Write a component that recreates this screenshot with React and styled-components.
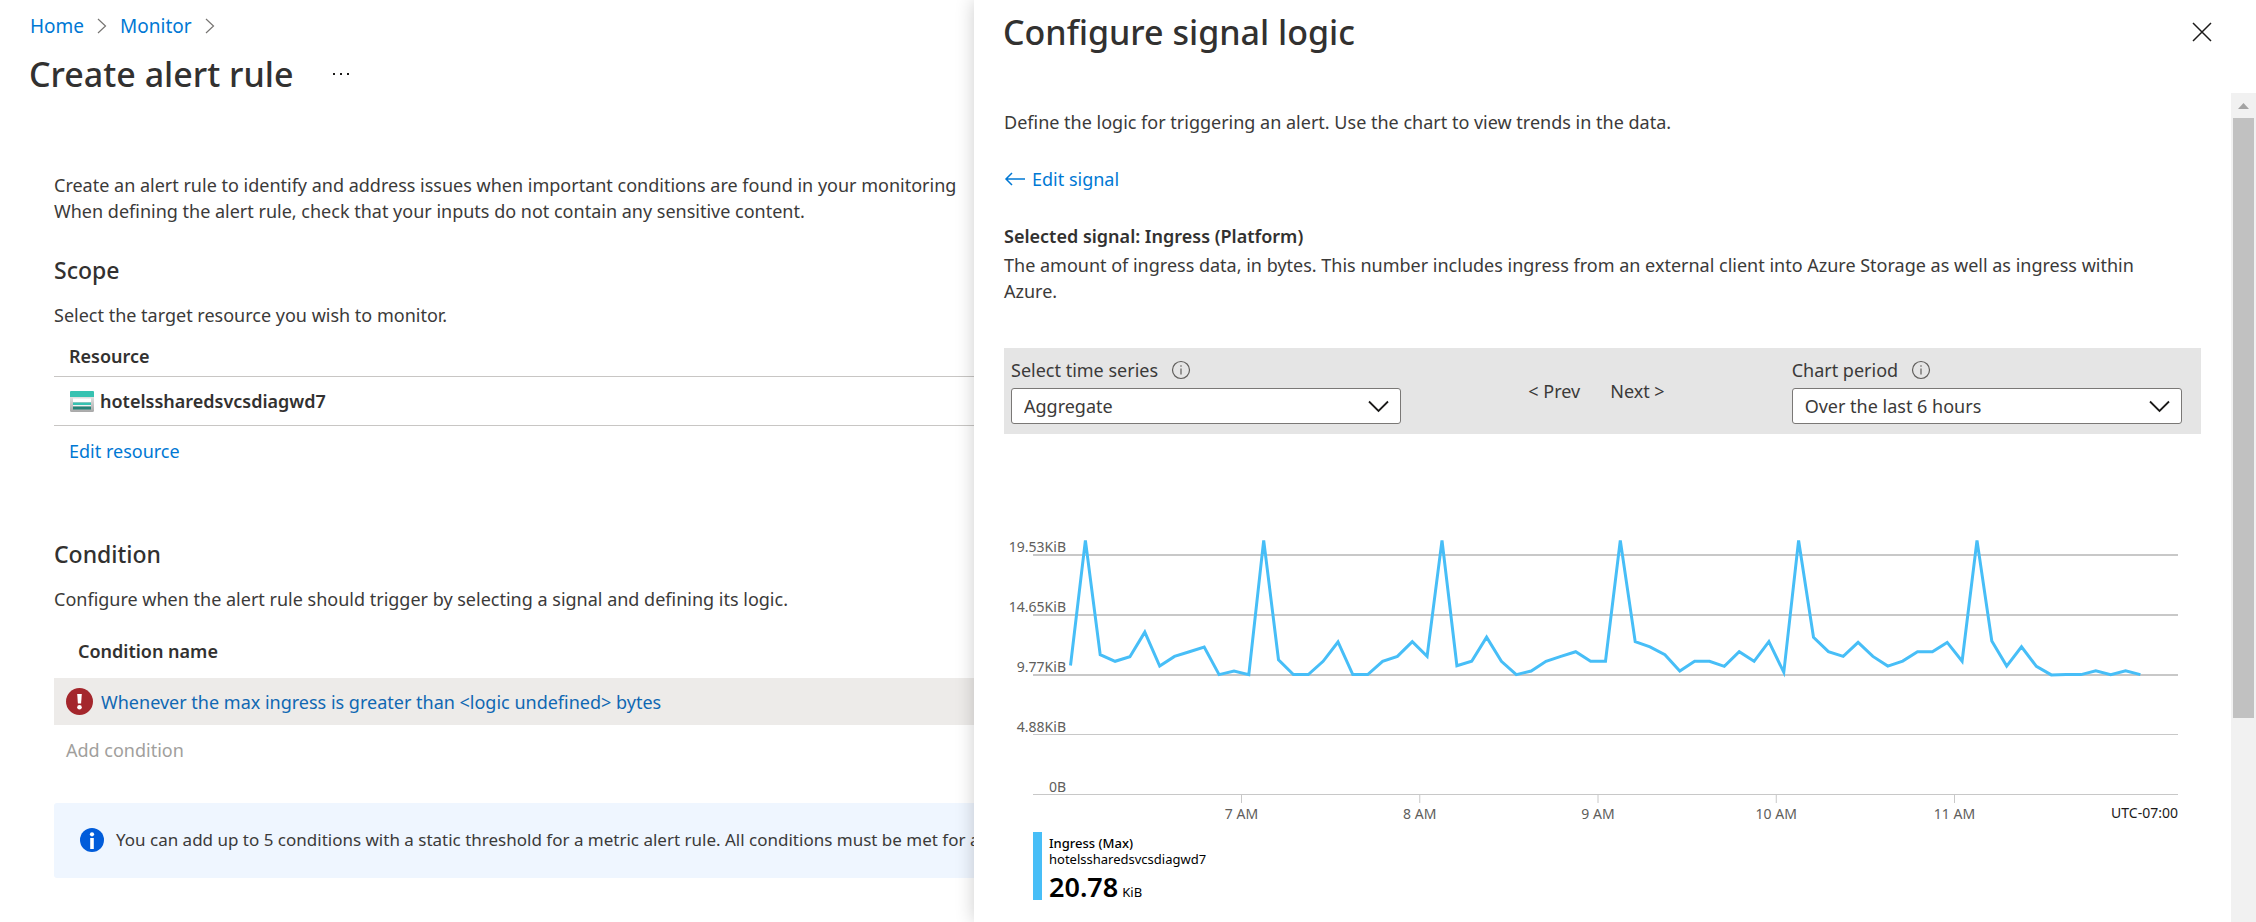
import React from "react";
import styled, { createGlobalStyle } from "styled-components";

const GlobalStyle = createGlobalStyle`
  *, *::before, *::after { box-sizing: border-box; }
  body {
    margin: 0;
    background: #fff;
    color: #3b3a39;
    font-family: "Noto Sans", "Open Sans", sans-serif;
    font-size: 18px;
    line-height: 26px;
  }
  button, select { font: inherit; color: inherit; }
  svg { display: block; flex: none; }
`;

const Page = styled.div`
  display: grid;
  grid-template-columns: minmax(0, 974fr) minmax(0, 1282fr);
  min-height: 100vh;
`;

/* ---------- alert rule page ---------- */

const RulePage = styled.main`
  overflow: hidden;
  padding-top: 14px;
`;

const Breadcrumb = styled.nav`
  display: flex;
  align-items: center;
  gap: 13px;
  height: 24px;
  padding-left: 30px;
  font-size: 19px;
  line-height: 24px;
`;

const Link = styled.a`
  color: #0078d4;
  text-decoration: none;
`;

const TitleBar = styled.header`
  display: flex;
  align-items: center;
  gap: 38px;
  margin-top: 14px;
  padding-left: 29px;
`;

const Title = styled.h1`
  margin: 0;
  color: #323130;
  font-size: 34px;
  font-weight: 500;
  line-height: 44px;
`;

const IconButton = styled.button`
  display: flex;
  padding: 0;
  border: 0;
  background: none;
  color: #1b1a19;
`;

const RuleBody = styled.div`
  padding: 76px 0 32px 54px;
  white-space: nowrap;
`;

const Text = styled.p`
  margin: 0;
`;

const Section = styled.section`
  margin-top: ${(p) => p.$gap}px;
`;

const SectionTitle = styled.h2`
  margin: 0 0 18px;
  color: #323130;
  font-size: 23px;
  font-weight: 500;
  line-height: 28px;
`;

const Table = styled.table`
  width: 100%;
  border-collapse: separate;
  border-spacing: 0;
`;

const ResourceHead = styled.th`
  padding: 15px 15px 7px;
  border-bottom: 1px solid #c8c6c4;
  color: #323130;
  font-weight: 600;
  text-align: left;
`;

const ResourceCell = styled.td`
  padding: 11px 16px;
  border-bottom: 1px solid #c8c6c4;
  color: #323130;
  font-weight: 600;
`;

const ConditionHead = styled.th`
  padding: 26px 24px 14px;
  color: #323130;
  font-weight: 600;
  text-align: left;
`;

const ConditionCell = styled.td`
  padding: 10px 12px;
  background: #edebe9;
`;

const IconLabel = styled.div`
  display: flex;
  align-items: center;
  gap: ${(p) => p.$gap}px;
`;

const ConditionLink = styled(Link)`
  color: #1068b3;
`;

const TableAction = styled.div`
  margin-top: 12px;
  padding-left: ${(p) => p.$indent}px;
`;

const AddButton = styled.button`
  display: block;
  padding: 0;
  border: 0;
  background: none;
  &:disabled { color: #a19f9d; }
`;

const Banner = styled.div`
  display: flex;
  align-items: center;
  gap: 12px;
  margin-top: 40px;
  padding: 24px 0 25px 26px;
  border-radius: 3px 0 0 3px;
  background: #eff6ff;
  font-size: 17px;
`;

/* ---------- signal logic panel ---------- */

const Panel = styled.aside`
  position: relative;
  display: flex;
  flex-direction: column;
  background: #fff;
  box-shadow: 0 0 18px rgba(0, 0, 0, 0.2);
`;

const PanelHeader = styled.header`
  display: flex;
  align-items: center;
  justify-content: space-between;
  height: 93px;
  padding: 10px 44px 39px 29px;
`;

const PanelMain = styled.div`
  display: flex;
  flex: 1;
`;

const PanelContent = styled.div`
  flex: 1;
  min-width: 0;
  padding: 16px 30px 20px;
`;

const BackLink = styled(Link)`
  display: inline-flex;
  align-items: center;
  gap: 6px;
  margin: 31px 0;
`;

const SignalName = styled.h2`
  margin: 0 0 3px;
  color: #323130;
  font-size: 18px;
  font-weight: 600;
  line-height: 26px;
`;

const SignalText = styled(Text)`
  padding-right: 36px;
`;

const Toolbar = styled.div`
  display: grid;
  grid-template-columns: 1fr 1fr 1fr;
  align-items: center;
  margin-top: 44px;
  padding: 9px 19px 10px 7px;
  background: #e5e5e5;
`;

const FieldLabel = styled.label`
  display: flex;
  align-items: center;
  gap: 13px;
  margin-bottom: 5px;
`;

const SelectBox = styled.div`
  position: relative;
  svg {
    position: absolute;
    top: 12px;
    right: 12px;
    pointer-events: none;
  }
`;

const Select = styled.select`
  display: block;
  width: 100%;
  height: 36px;
  padding: 0 44px 0 12px;
  border: 1px solid #7a7876;
  border-radius: 3px;
  background: #fff;
  appearance: none;
`;

const Pager = styled.div`
  display: flex;
  justify-content: center;
  gap: 30px;
`;

const PagerButton = styled.button`
  padding: 0;
  border: 0;
  background: none;
`;

const ChartSvg = styled.svg`
  width: 100%;
  height: auto;
  margin-top: 96px;
  font-size: 14px;
`;

const Legend = styled.div`
  display: flex;
  margin: 8px 0 0 29px;
  color: #000;
  font-size: 13px;
  line-height: 16px;
`;

const LegendBar = styled.span`
  width: 9px;
  margin-right: 7px;
  background: #47bef7;
`;

const LegendText = styled.div`
  padding-top: 3px;
`;

const LegendName = styled.div`
  font-weight: 500;
`;

const LegendValue = styled.div`
  display: flex;
  align-items: baseline;
  gap: 4px;
  height: 25px;
  margin-top: 8px;
  line-height: 24px;
  strong {
    font-size: 27px;
    font-weight: 600;
  }
`;

const Scrollbar = styled.div`
  display: flex;
  flex-direction: column;
  width: 25px;
  background: #f1f1f1;
`;

const ScrollArrow = styled.div`
  display: flex;
  align-items: center;
  justify-content: center;
  height: 25px;
`;

const ScrollThumb = styled.div`
  flex: 600;
  margin: 0 2px;
  background: #c1c1c1;
`;

const ScrollRest = styled.div`
  flex: 204;
`;

/* ---------- icons ---------- */

const Crumb = () => (
  <svg width="10" height="16" viewBox="0 0 10 16" fill="none" stroke="#767472" strokeWidth="1.2">
    <path d="M1 1l7.500 7L1 15" />
  </svg>
);

const Dots = () => (
  <svg width="20" height="6" viewBox="0 0 20 6" fill="currentColor">
    <path d="M2 2h2v2H2zM9 2h2v2H9zM16 2h2v2h-2z" />
  </svg>
);

const CloseIcon = () => (
  <svg width="20" height="20" viewBox="0 0 20 20" fill="none" stroke="currentColor" strokeWidth="1.500">
    <path d="M1 1l18 18M19 1L1 19" />
  </svg>
);

const StorageIcon = () => (
  <svg width="24" height="21" viewBox="0 0 24 21">
    <defs>
      <linearGradient id="storageFrame" x1="0" y1="0" x2="0" y2="1">
        <stop offset="0" stopColor="#e6e6e6" />
        <stop offset="1" stopColor="#a8a8a8" />
      </linearGradient>
    </defs>
    <path d="M0 5h24v14.500a1.500 1.500 0 0 1-1.500 1.500h-21A1.500 1.500 0 0 1 0 19.500z" fill="url(#storageFrame)" />
    <path d="M0 1a1 1 0 0 1 1-1h22a1 1 0 0 1 1 1v5H0z" fill="#37c2b1" />
    <path d="M3 7.500h18V11H3z" fill="#fff" />
    <path d="M3 11.500h18V14H3z" fill="#37c2b1" />
    <path d="M3 14h18v1.500H3z" fill="#fff" opacity=".8" />
    <path d="M3 15.500h18v3H3z" fill="#258277" />
  </svg>
);

const ErrorIcon = () => (
  <svg width="27" height="27" viewBox="0 0 27 27">
    <circle cx="13.500" cy="13.500" r="13.500" fill="#a4262c" />
    <path d="M11.200 6h4.600l-.7 9.500h-3.200z" fill="#fff" />
    <circle cx="13.500" cy="19.300" r="2.300" fill="#fff" />
  </svg>
);

const InfoBadge = () => (
  <svg width="24" height="24" viewBox="0 0 24 24">
    <circle cx="12" cy="12" r="12" fill="#015cda" />
    <circle cx="12" cy="6.300" r="2.100" fill="#fff" />
    <path d="M10.200 10h3.600v11h-3.600z" fill="#fff" />
  </svg>
);

const InfoOutline = () => (
  <svg width="20" height="20" viewBox="0 0 20 20" fill="none" stroke="#605e5c" strokeWidth="1.200">
    <circle cx="10" cy="10" r="8.500" />
    <path d="M10 8.500v6M10 5.200v1.500" />
  </svg>
);

const BackArrow = () => (
  <svg width="22" height="14" viewBox="0 0 22 14" fill="none" stroke="currentColor" strokeWidth="1.500">
    <path d="M21 7H2M8 1L2 7l6 6" />
  </svg>
);

const ChevronDown = () => (
  <svg width="21" height="13" viewBox="0 0 21 13" fill="none" stroke="#1b1a19" strokeWidth="1.800">
    <path d="M1 1.500l9.500 9.500L20 1.500" />
  </svg>
);

/* ---------- chart ---------- */

const PEAK = 20.78;
const SERIES = [
  10.55, PEAK, 11.43, 10.89, 11.27, 13.28, 10.5, 11.29, 11.68, 12.06, 9.8, 10.1, 9.8,
  PEAK, 11.02, 9.8, 9.8, 10.89, 12.47, 9.8, 9.8, 10.89, 11.29, 12.49, 11.29,
  PEAK, 10.53, 10.89, 12.87, 10.89, 9.8, 10.1, 10.89, 11.29, 11.68, 10.89, 10.89,
  PEAK, 12.49, 12.08, 11.43, 10.1, 10.89, 10.89, 10.48, 11.68, 10.89, 12.49, 9.99,
  PEAK, 12.85, 11.68, 11.29, 12.44, 11.29, 10.5, 10.91, 11.68, 11.68, 12.44, 10.89,
  PEAK, 12.55, 10.5, 12.08, 10.48, 9.78, 9.8, 9.8, 10.12, 9.8, 10.12, 9.8,
];
const ZERO_Y = 264;
const PER_KIB = 12.23;
const GRID = [
  { label: "19.53KiB", y: 25, w: 2 },
  { label: "14.65KiB", y: 85, w: 2 },
  { label: "9.77KiB", y: 145, w: 2 },
  { label: "4.88KiB", y: 204.5, w: 1 },
  { label: "0B", y: 264.5, w: 1 },
];
const HOURS = ["7 AM", "8 AM", "9 AM", "10 AM", "11 AM"];
const points = SERIES.map(
  (v, i) => `${(66.5 + i * 14.86).toFixed(1)},${(ZERO_Y - v * PER_KIB + 0.5).toFixed(1)}`
).join(" ");

const Chart = () => (
  <ChartSvg viewBox="0 0 1197 294" role="img" aria-label="Ingress over the last 6 hours">
    {GRID.map((g) => (
      <g key={g.label}>
        <line x1="29" x2="1174" y1={g.y} y2={g.y} stroke="#c8c8c8" strokeWidth={g.w} />
        <text x="62" y={g.y - 3} textAnchor="end" fill="#605e5c">{g.label}</text>
      </g>
    ))}
    {HOURS.map((h, i) => {
      const x = 237.5 + i * 178.25;
      return (
        <g key={h}>
          <line x1={x} x2={x} y1="265" y2="273" stroke="#c8c8c8" />
          <text x={x} y="289" textAnchor="middle" fill="#605e5c">{h}</text>
        </g>
      );
    })}
    <text x="1174" y="288" textAnchor="end" fill="#1b1a19">UTC-07:00</text>
    <polyline points={points} fill="none" stroke="#47bef7" strokeWidth="3" />
  </ChartSvg>
);

/* ---------- page ---------- */

const Field = ({ id, label, value }) => (
  <div>
    <FieldLabel htmlFor={id}>
      {label}
      <InfoOutline />
    </FieldLabel>
    <SelectBox>
      <Select id={id} defaultValue={value}>
        <option>{value}</option>
      </Select>
      <ChevronDown />
    </SelectBox>
  </div>
);

export default function App() {
  return (
    <>
      <GlobalStyle />
      <Page>
        <RulePage>
          <Breadcrumb>
            <Link href="#home">Home</Link>
            <Crumb />
            <Link href="#monitor">Monitor</Link>
            <Crumb />
          </Breadcrumb>
          <TitleBar>
            <Title>Create alert rule</Title>
            <IconButton type="button" aria-label="More"><Dots /></IconButton>
          </TitleBar>
          <RuleBody>
            <Text>
              Create an alert rule to identify and address issues when important conditions are found in your monitoring
              <br />
              When defining the alert rule, check that your inputs do not contain any sensitive content.
            </Text>

            <Section $gap={32}>
              <SectionTitle>Scope</SectionTitle>
              <Text>Select the target resource you wish to monitor.</Text>
              <Table>
                <thead>
                  <tr><ResourceHead>Resource</ResourceHead></tr>
                </thead>
                <tbody>
                  <tr>
                    <ResourceCell>
                      <IconLabel $gap={6}><StorageIcon />hotelssharedsvcsdiagwd7</IconLabel>
                    </ResourceCell>
                  </tr>
                </tbody>
              </Table>
              <TableAction $indent={15}><Link href="#edit-resource">Edit resource</Link></TableAction>
            </Section>

            <Section $gap={76}>
              <SectionTitle>Condition</SectionTitle>
              <Text>Configure when the alert rule should trigger by selecting a signal and defining its logic.</Text>
              <Table>
                <thead>
                  <tr><ConditionHead>Condition name</ConditionHead></tr>
                </thead>
                <tbody>
                  <tr>
                    <ConditionCell>
                      <IconLabel $gap={8}>
                        <ErrorIcon />
                        <ConditionLink href="#condition">
                          Whenever the max ingress is greater than &lt;logic undefined&gt; bytes
                        </ConditionLink>
                      </IconLabel>
                    </ConditionCell>
                  </tr>
                </tbody>
              </Table>
              <TableAction $indent={12}><AddButton type="button" disabled>Add condition</AddButton></TableAction>
              <Banner>
                <InfoBadge />
                <span>
                  You can add up to 5 conditions with a static threshold for a metric alert rule. All conditions must be met for a
                </span>
              </Banner>
            </Section>
          </RuleBody>
        </RulePage>

        <Panel>
          <PanelHeader>
            <Title as="h2">Configure signal logic</Title>
            <IconButton type="button" aria-label="Close"><CloseIcon /></IconButton>
          </PanelHeader>
          <PanelMain>
            <PanelContent>
              <Text>Define the logic for triggering an alert. Use the chart to view trends in the data.</Text>
              <BackLink href="#edit-signal"><BackArrow />Edit signal</BackLink>
              <SignalName>Selected signal: Ingress (Platform)</SignalName>
              <SignalText>
                The amount of ingress data, in bytes. This number includes ingress from an external client into Azure Storage as well as ingress within Azure.
              </SignalText>
              <Toolbar>
                <Field id="series" label="Select time series" value="Aggregate" />
                <Pager>
                  <PagerButton type="button">&lt; Prev</PagerButton>
                  <PagerButton type="button">Next &gt;</PagerButton>
                </Pager>
                <Field id="period" label="Chart period" value="Over the last 6 hours" />
              </Toolbar>
              <Chart />
              <Legend>
                <LegendBar />
                <LegendText>
                  <LegendName>Ingress (Max)</LegendName>
                  <div>hotelssharedsvcsdiagwd7</div>
                  <LegendValue><strong>20.78</strong>KiB</LegendValue>
                </LegendText>
              </Legend>
            </PanelContent>
            <Scrollbar aria-hidden="true">
              <ScrollArrow>
                <svg width="11" height="6" viewBox="0 0 11 6" fill="#a3a3a3"><path d="M5.500 0L11 6H0z" /></svg>
              </ScrollArrow>
              <ScrollThumb />
              <ScrollRest />
            </Scrollbar>
          </PanelMain>
        </Panel>
      </Page>
    </>
  );
}
